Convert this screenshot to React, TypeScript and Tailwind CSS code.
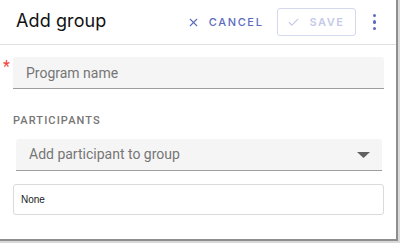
import { X, Check } from "lucide-react";

export default function App() {
  return (
    <div className="w-[400px] h-[243px] bg-[#d9d9d9]">
      <div className="w-[398px] h-[241px] bg-white border-r-2 border-b-2 border-[#8e8e8e] flex flex-col">
        {/* header */}
        <div className="h-[45px] flex items-center border-b border-[#e0e0e0] pl-4 pr-[20px] shrink-0">
          <h1 className="text-[18px] leading-none text-[#111] font-['Inter',sans-serif] tracking-[0.1px] mt-[-2px]">
            Add group
          </h1>
          <div className="ml-auto flex items-center">
            <button className="flex items-center gap-[9px] text-[#5c6bc0] font-['Inter',sans-serif] text-[11px] font-medium tracking-[0.15em]">
              <X size={13} strokeWidth={2} />
              CANCEL
            </button>
            <button className="ml-[13px] w-[79px] h-[28px] border border-[#d4d8ee] rounded-[3px] flex items-center justify-center gap-[9px] text-[#c5cae9] font-['Inter',sans-serif] text-[11px] font-semibold tracking-[0.14em]">
              <Check size={13} strokeWidth={2} />
              SAVE
            </button>
            <div className="ml-[17px] flex flex-col gap-[3px] items-center">
              <span className="w-[3.5px] h-[3.5px] rounded-full bg-[#5c6bc0]" />
              <span className="w-[3.5px] h-[3.5px] rounded-full bg-[#5c6bc0]" />
              <span className="w-[3.5px] h-[3.5px] rounded-full bg-[#5c6bc0]" />
            </div>
          </div>
        </div>

        {/* body */}
        <div className="font-['Roboto',sans-serif] pl-[13px] pr-[12px]">
          <div className="relative mt-[12px]">
            <span className="absolute left-[-10px] top-[2px] text-[#f44336] text-[16px] leading-none">*</span>
            <div className="h-[32px] bg-[#f5f5f5] border-b border-[#9e9e9e] rounded-t-[3px] flex items-center pl-[13px]">
              <span className="text-[14px] text-[#757575] mt-[1px]">Program name</span>
            </div>
          </div>

          <div className="mt-[26px] text-[11px] font-medium tracking-[0.1em] text-[#757575] leading-none">
            PARTICIPANTS
          </div>

          <div className="ml-[3px] mr-[2px] mt-[13px] h-[32px] bg-[#f5f5f5] border-b border-[#9e9e9e] rounded-t-[3px] flex items-center pl-[13px] pr-[12px]">
            <span className="text-[14px] text-[#757575]">Add participant to group</span>
            <svg className="ml-auto" width="13" height="6" viewBox="0 0 13 6">
              <path d="M0 0h13L6.5 6z" fill="#616161" />
            </svg>
          </div>

          <div className="mt-[13px] h-[31px] border border-[#dadada] rounded-[3px] flex items-center pl-[7px]">
            <span className="text-[10px] text-[#212121] font-['Liberation_Sans',sans-serif]">None</span>
          </div>
        </div>
      </div>
    </div>
  );
}
